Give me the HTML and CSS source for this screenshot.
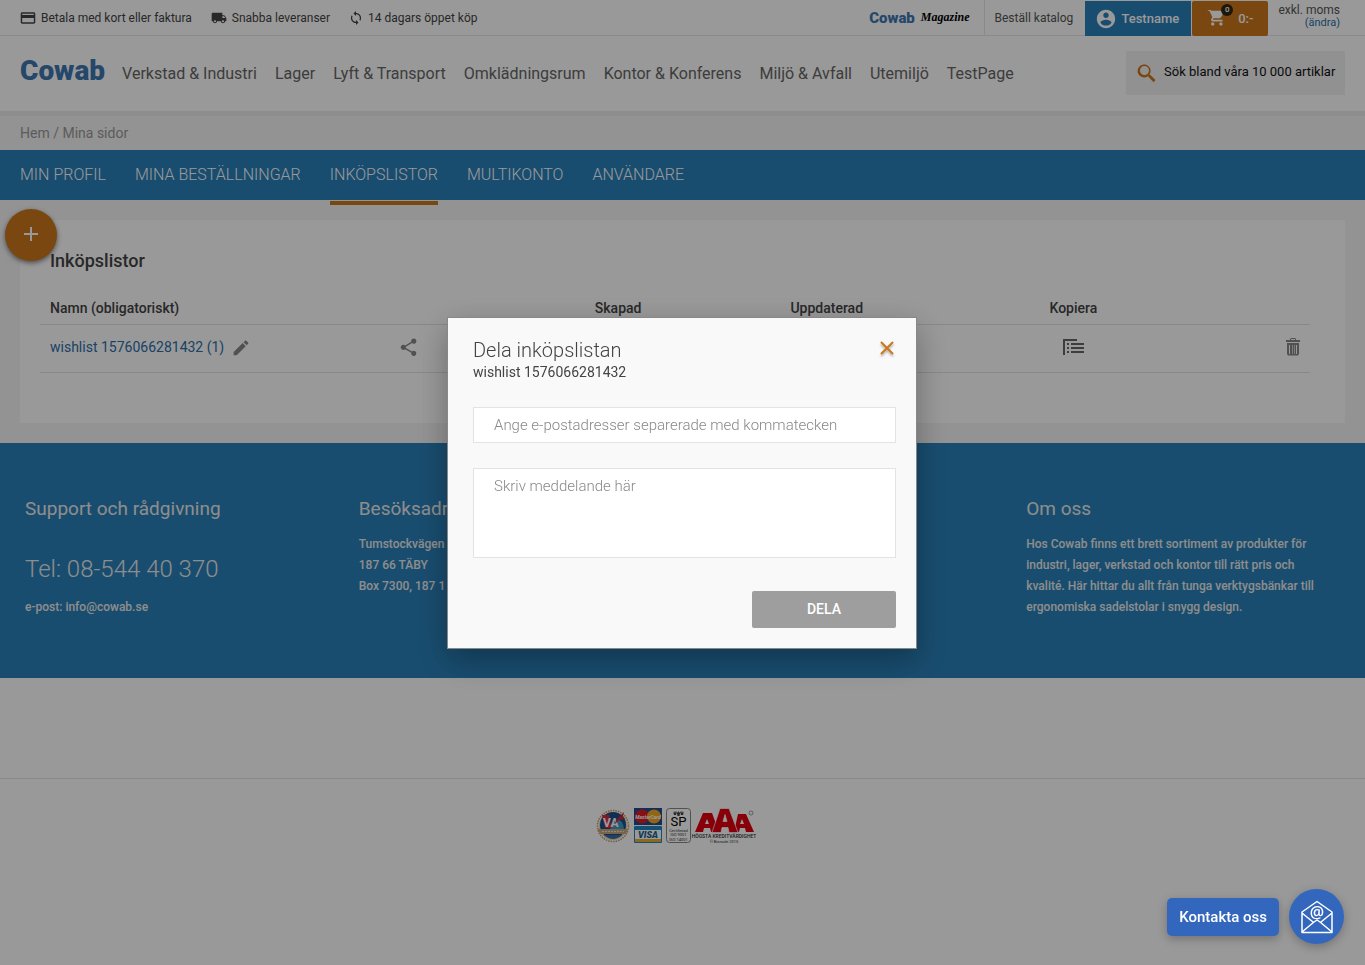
FILE: index.html
```html
<!DOCTYPE html>
<html lang="sv">
<head>
<meta charset="utf-8">
<meta name="viewport" content="width=device-width, initial-scale=1">
<title>Mina sidor – Inköpslistor</title>
<link rel="stylesheet" href="styles.css">
</head>
<body>
<div class="topbar">
  <ul class="usps">
    <li><svg width="16" height="16" viewBox="1 1 22 22"><path d="M20 4H4c-1.1 0-2 .9-2 2v12c0 1.100.9 2 2 2h16c1.100 0 2-.9 2-2V6c0-1.100-.9-2-2-2zm0 14H4v-6h16v6zm0-10H4V6h16v2z"/></svg>Betala med kort eller faktura</li>
    <li><svg width="16" height="16" viewBox="0 0 24 24"><path d="M20 8h-3V4H3c-1.100 0-2 .9-2 2v11h2c0 1.660 1.340 3 3 3s3-1.340 3-3h6c0 1.660 1.340 3 3 3s3-1.340 3-3h2v-5l-3-4zM6 18.500c-.83 0-1.500-.67-1.500-1.500s.67-1.500 1.500-1.500 1.500.67 1.500 1.500-.67 1.500-1.500 1.500zm13.500-9l1.960 2.500H17V9.500h2.500zm-1.500 9c-.83 0-1.500-.67-1.500-1.500s.67-1.500 1.500-1.500 1.500.67 1.500 1.500-.67 1.500-1.500 1.500z"/></svg>Snabba leveranser</li>
    <li><svg width="14" height="14" viewBox="1 1 22 22"><path d="M12 4V1L8 5l4 4V6c3.310 0 6 2.690 6 6 0 1.010-.25 1.970-.7 2.800l1.460 1.460C19.540 15.030 20 13.570 20 12c0-4.420-3.580-8-8-8zm0 14c-3.310 0-6-2.690-6-6 0-1.010.25-1.970.7-2.800L5.240 7.740C4.460 8.970 4 10.430 4 12c0 4.420 3.580 8 8 8v3l4-4-4-4v3z"/></svg>14 dagars öppet köp</li>
  </ul>
  <div class="tools">
    <a class="magazine" href="#"><span class="mag-brand">Cowab</span><span class="mag-word">Magazine</span></a>
    <a class="catalog" href="#">Beställ katalog</a>
    <a class="account" href="#"><svg width="22" height="22" viewBox="0 0 24 24"><path d="M12 2C6.480 2 2 6.480 2 12s4.480 10 10 10 10-4.480 10-10S17.520 2 12 2zm0 3c1.660 0 3 1.340 3 3s-1.340 3-3 3-3-1.340-3-3 1.340-3 3-3zm0 14.200c-2.500 0-4.710-1.280-6-3.220.03-1.990 4-3.080 6-3.080 1.990 0 5.970 1.090 6 3.080-1.290 1.940-3.500 3.220-6 3.220z"/></svg>Testname</a>
    <a class="cart" href="#"><span class="cart-icon"><svg width="18" height="18" viewBox="0 3 22 22"><path d="M7 18c-1.100 0-1.990.9-1.990 2S5.900 22 7 22s2-.9 2-2-.9-2-2-2zM1 2v2h2l3.600 7.590-1.350 2.450c-.16.28-.25.61-.25.960 0 1.100.9 2 2 2h12v-2H7.420c-.14 0-.25-.11-.25-.25l.03-.12.9-1.630h7.450c.75 0 1.410-.41 1.750-1.030l3.580-6.490A1 1 0 0 0 20 4H5.210l-.94-2H1zm16 16c-1.100 0-1.990.9-1.990 2s.89 2 1.990 2 2-.9 2-2-.9-2-2-2z"/></svg><span class="badge">0</span></span>0:-</a>
    <div class="vat"><span>exkl. moms</span><a href="#">(ändra)</a></div>
  </div>
</div>
<header class="header">
  <a class="logo" href="#">Cowab</a>
  <nav class="mainnav" aria-label="Kategorier">
    <a href="#">Verkstad &amp; Industri</a><a href="#">Lager</a><a href="#">Lyft &amp; Transport</a><a href="#">Omklädningsrum</a><a href="#">Kontor &amp; Konferens</a><a href="#">Miljö &amp; Avfall</a><a href="#">Utemiljö</a><a href="#">TestPage</a>
  </nav>
  <label class="search"><svg width="24" height="24" viewBox="0 0 24 24"><path d="M15.500 14h-.79l-.28-.27A6.500 6.500 0 1 0 13 15.200l.7.300v.79l5 4.990L20.490 19l-4.990-5zm-6 0A4.500 4.500 0 1 1 9.500 5a4.500 4.500 0 0 1 0 9z"/></svg><input type="text" aria-label="Sök" placeholder="Sök bland våra 10 000 artiklar"></label>
</header>
<div class="crumbs"><a href="#">Hem</a> / <span>Mina sidor</span></div>
<nav class="tabs" aria-label="Mina sidor">
  <a href="#">MIN PROFIL</a><a href="#">MINA BESTÄLLNINGAR</a><a class="active" href="#">INKÖPSLISTOR</a><a href="#">MULTIKONTO</a><a href="#">ANVÄNDARE</a>
</nav>
<main class="main">
  <section class="card">
    <button class="fab" aria-label="Skapa inköpslista"><svg width="16" height="16" viewBox="0 0 16 16"><path d="M7 0h2v6h6v2H9v6H7V8H1V6h6z"/></svg></button>
    <h1>Inköpslistor</h1>
    <table class="lists">
      <colgroup><col class="c-name"><col class="c-share"><col class="c-created"><col class="c-updated"><col></colgroup>
      <thead><tr><th>Namn (obligatoriskt)</th><th></th><th>Skapad</th><th>Uppdaterad</th><th>Kopiera</th></tr></thead>
      <tbody><tr>
        <td><div class="cell"><a href="#">wishlist 1576066281432 (1)</a><button class="icon" aria-label="Byt namn"><svg width="18" height="18" viewBox="1 0 22 22"><path d="M3 17.250V21h3.750L17.810 9.940l-3.750-3.750L3 17.250zM20.710 7.040a1 1 0 0 0 0-1.410l-2.340-2.340a1 1 0 0 0-1.410 0l-1.830 1.830 3.750 3.750 1.830-1.830z"/></svg></button></div></td>
        <td><button class="icon" aria-label="Dela"><svg width="20" height="20" viewBox="1 -1 23 23"><path d="M18 16.080c-.76 0-1.440.3-1.960.77L8.910 12.700c.05-.23.09-.46.09-.7s-.04-.47-.09-.7l7.050-4.110c.54.5 1.250.81 2.040.81 1.660 0 3-1.340 3-3s-1.340-3-3-3-3 1.340-3 3c0 .24.040.47.090.7L8.040 9.810C7.500 9.310 6.790 9 6 9c-1.660 0-3 1.340-3 3s1.340 3 3 3c.79 0 1.500-.31 2.040-.81l7.120 4.160c-.05.21-.08.43-.08.650 0 1.610 1.310 2.920 2.920 2.920s2.920-1.310 2.920-2.920-1.310-2.920-2.920-2.920z"/></svg></button></td>
        <td></td>
        <td></td>
        <td><div class="cell cell-actions"><button class="icon dark" aria-label="Kopiera"><svg width="21" height="17" viewBox="0 0 21 17"><path d="M0 0h14v2H2v14H0zM4 4h2v2H4zm4 0h13v2H8zM4 8h2v2H4zm4 0h13v2H8zm-4 4h2v2H4zm4 0h13v2H8z"/></svg></button><button class="icon" aria-label="Ta bort"><svg width="14" height="18" viewBox="0 0 14 18"><path fill-rule="evenodd" d="M4 2V1l1-1h4l1 1v1h4v2H0V2zm1 0h4V1H5zM1 5h12v11l-1 1.500H2L1 16zm2 2v9h1V7zm3 0v9h.6V7zm2 0v9h.6V7zm2 0v9h1V7z"/></svg></button></div></td>
      </tr></tbody>
    </table>
  </section>
</main>
<footer>
  <div class="info">
    <div><h2>Support och rådgivning</h2><p class="tel">Tel: 08-544 40 370</p><p>e-post: info@cowab.se</p></div>
    <div><h2>Besöksadress</h2><p>Tumstockvägen<br>187 66 TÄBY<br>Box 7300, 187 1</p></div>
    <div></div>
    <div><h2>Om oss</h2><p>Hos Cowab finns ett brett sortiment av produkter för industri, lager, verkstad och kontor till rätt pris och kvalité. Här hittar du allt från tunga verktygsbänkar till ergonomiska sadelstolar i snygg design.</p></div>
  </div>
  <div class="badges">
    <svg width="160" height="38" viewBox="0 0 160 38" role="img" aria-label="Certifieringar och betalkort">
      <circle cx="17" cy="18" r="15.500" fill="none" stroke="#c49a62" stroke-width="1.500" stroke-dasharray="1.500 1"/>
      <circle cx="17" cy="18" r="14" fill="#ddd0ba"/><circle cx="17" cy="17" r="13" fill="#1d4f85"/>
      <path d="M14 21l5-9q8-2 9 9z" fill="#3f9ac5"/>
      <path d="M6 7h7l3 13H9z" fill="#d82846"/>
      <text x="7" y="19" class="b-va">VA</text>
      <path d="M20 12l6-6 2-2-1 4 2 3-6 1-4 4z" fill="#c22c3c"/>
      <path d="M2 21h30l-2 5H4z" fill="#c6a77c"/><path d="M6 23.500h22" stroke="#efe3cc" stroke-dasharray="2 1"/><path d="M8 27h18q-9 8-18 0" fill="#396da0"/>
      <path d="M38 0h28v17H38z" fill="#204b91"/><circle cx="46" cy="8.500" r="7" fill="#e01b24"/><circle cx="58" cy="8.500" r="7" fill="#f3a923"/>
      <text x="52" y="11" class="b-mc">MasterCard</text>
      <path d="M38 18h28v17H38z" fill="#fff"/><path d="M39 19h26v3H39z" fill="#2188bd"/><path d="M39 31h26v3H39z" fill="#eab038"/><path d="M38.500 18.500h27v16h-27z" fill="none" stroke="#2188bd"/>
      <text x="52" y="30" class="b-visa">VISA</text>
      <rect x="70.500" y=".5" width="24" height="34" rx="3" fill="none" stroke="#888"/>
      <path d="M77 3l1 2 1-2 1 2 1-2-1 4h-2zm7 0l1 2 1-2 1 2 1-2-1 4h-2zm-3.500 0l1 2 1-2 1 2 1-2-1 5h-2z"/>
      <text x="82.500" y="18" class="b-sp">SP</text><text x="82.500" y="24" class="b-tiny">Certifierad</text><text x="82.500" y="28" class="b-tiny">ISO 9001</text><text x="82.500" y="33" class="b-tiny">ISO 14001</text>
      <g fill="#e2000f" fill-rule="evenodd">
        <path d="M99 24l8-19h9l7 19h-8l-1-4h-6l-1 4zm10-8h4l-2-5z"/>
        <path d="M138 24l4-18h8l8 18h-8l-1-4h-5l-1 4zm6-8h4l-2-5z"/>
        <path stroke="#fff" stroke-width=".7" d="M116 24.500l8-24h9l9 24h-9l-1-5h-6l-1 5zm11-11h4l-2-7z"/>
      </g>
      <circle cx="155" cy="5" r="2" fill="none" stroke="#777" stroke-width=".7"/>
      <text x="128" y="30" class="b-aaa">HÖGSTA KREDITVÄRDIGHET</text><text x="128" y="35" class="b-tiny">© Bisnode 2015</text>
    </svg>
  </div>
</footer>
<div class="overlay">
  <form class="dialog" role="dialog" aria-labelledby="dialog-title">
    <div class="dialog-head">
      <div><h2 id="dialog-title">Dela inköpslistan</h2><p>wishlist 1576066281432</p></div>
      <button class="close" type="button" aria-label="Stäng"><svg width="14" height="14" viewBox="0 0 14 14"><path d="M1 1l12 12M13 1L1 13"/></svg></button>
    </div>
    <input class="field" type="text" aria-label="E-postadresser" placeholder="Ange e-postadresser separerade med kommatecken">
    <textarea class="field message" aria-label="Meddelande" placeholder="Skriv meddelande här"></textarea>
    <button class="submit" type="button">DELA</button>
  </form>
</div>
<div class="chat">
  <button class="chat-label">Kontakta oss</button>
  <button class="chat-mail" aria-label="Skicka e-post"><svg width="34" height="34" viewBox="0 0 34 34"><path d="M2 12L17 1.500 32 12v20.500H2zM2 13l11 9M32 13l-11 9M2 32l12-10 3-2 3 2 12 10"/><text x="17" y="18">@</text></svg></button>
</div>
</body>
</html>
```
FILE: styles.css
```css
* { box-sizing: border-box; }
body { margin: 0; min-height: 100vh; background: #fff; color: #444; font-family: Roboto, "Liberation Sans", sans-serif; font-size: 14px; }
a { color: inherit; text-decoration: none; }
button, input, textarea { font: inherit; }
button { border: 0; padding: 0; background: none; cursor: pointer; }
h1, h2, p, ul { margin: 0; padding: 0; }
svg { display: block; flex: none; fill: currentColor; }

.topbar { display: flex; justify-content: space-between; height: 36px; padding: 0 25px 0 20px; border-bottom: 1px solid #e6e6e6; font-size: 12px; }
.usps { display: flex; align-items: center; gap: 19px; list-style: none; color: #444; }
.usps li { display: flex; align-items: center; gap: 5px; }
.tools { display: flex; align-items: stretch; color: #555; }
.magazine { display: flex; align-items: center; gap: 6px; padding-right: 14px; border-right: 1px solid #e6e6e6; }
.mag-brand { color: #3c77b1; font-size: 15px; font-weight: 900; }
.mag-word { color: #000; font-family: "Liberation Serif", serif; font-size: 12px; font-weight: 700; font-style: italic; }
.catalog { display: flex; align-items: center; padding: 0 12px 0 10px; }
.account, .cart { display: flex; align-items: center; height: 35px; margin-top: 1px; color: #fff; font-size: 13px; font-weight: 500; }
.account { gap: 4px; padding: 0 12px 0 10px; background: #2980b9; }
.cart { gap: 13px; margin-left: 1px; padding: 0 15px; background: #cc771b; border-radius: 2px; }
.cart-icon { position: relative; }
.badge { position: absolute; top: -6px; right: -8px; width: 12px; height: 12px; border-radius: 50%; background: #33250f; font-size: 8px; line-height: 12px; text-align: center; }
.vat { display: flex; flex-direction: column; align-items: flex-end; padding: 3px 0 0 10px; line-height: 14px; }
.vat a { color: #2a6fa8; font-size: 11px; line-height: 12px; }

.header { display: flex; align-items: center; height: 75px; padding: 0 20px 2px; }
.logo { color: #3c77b1; font-size: 28px; font-weight: 900; line-height: 32px; padding-bottom: 4px; }
.mainnav { display: flex; gap: 18px; margin: 2px 0 0 17px; color: #666; font-size: 16px; white-space: nowrap; }
.search { display: flex; align-items: center; gap: 5px; width: 219px; height: 44px; margin-left: auto; padding: 0 9px; background: #f2f2f2; color: #cc771b; }
.search input { flex: 1; min-width: 0; border: 0; padding: 0 0 2px; outline: 0; background: none; font-size: 13px; }
.search input::placeholder { color: #111; opacity: 1; }

.crumbs { height: 39px; padding: 9px 20px 0; border-top: 5px solid #ebebeb; background: #f5f5f5; color: #999; line-height: 17px; }
.tabs { display: flex; gap: 29px; height: 50px; padding: 0 20px; background: #2980b9; color: #fff; font-size: 16px; font-weight: 300; line-height: 49px; }
.tabs .active { height: 55px; border-bottom: 4px solid #cc771b; }
.main { padding: 20px; background: #f5f5f5; }
.card { position: relative; min-height: 203px; padding: 30px 35px 50px 20px; background: #fff; }
.card h1 { padding-left: 10px; font-size: 18px; font-weight: 500; line-height: 21px; }
.fab { position: absolute; top: -11px; left: -15px; display: grid; place-items: center; width: 52px; height: 52px; border-radius: 50%; background: #cc771b; color: #fff; box-shadow: 0 2px 5px rgba(0, 0, 0, .5); }
.lists { width: 100%; margin-top: 21px; border-collapse: collapse; table-layout: fixed; }
.lists th { height: 32px; padding: 0 10px; border-bottom: 1px solid #e3e3e3; font-weight: 500; text-align: left; }
.lists td { height: 48px; padding: 0 10px 2px; border-bottom: 1px solid #e3e3e3; color: #2a6fa8; }
.c-name { width: 27.500%; }
.c-share { width: 15.400%; }
.c-created { width: 15.400%; }
.c-updated { width: 20.400%; }
.cell { display: flex; align-items: center; gap: 8px; }
.cell-actions { justify-content: space-between; padding-left: 14px; }
.icon { color: #888; }
.icon.dark { color: #666; }

.info { display: grid; grid-template-columns: repeat(4, 1fr); min-height: 235px; padding: 53px 15px 0; background: #2980b9; color: #ececec; font-size: 12px; font-weight: 500; line-height: 21px; }
.info > div { padding: 0 25px 0 10px; }
.info h2 { margin-bottom: 12px; font-size: 19px; font-weight: 400; line-height: 26px; }
.info .tel { margin: 33px 0 14px; font-size: 24px; font-weight: 300; line-height: 28px; }
.badges { display: flex; justify-content: center; margin-top: 100px; padding: 29px 14px 29px 0; border-top: 1px solid #e3e3e3; }
.badges text { font-family: Roboto, sans-serif; text-anchor: middle; fill: #333; }
.badges .b-va { font-size: 12px; font-weight: 700; text-anchor: start; fill: #fff; }
.badges .b-mc { font-size: 5px; font-weight: 700; font-style: italic; fill: #fff; }
.badges .b-visa { font-size: 9px; font-weight: 900; font-style: italic; fill: #176194; }
.badges .b-sp { font-size: 13px; fill: #000; }
.badges .b-tiny { font-size: 4px; }
.badges .b-aaa { font-size: 5px; font-weight: 500; }

.overlay { position: fixed; inset: 0; display: grid; place-items: center; padding-right: 1px; background: rgba(0, 0, 0, .4); }
.dialog { display: flex; flex-direction: column; width: 470px; max-width: 100%; padding: 20px 20px 20px 25px; border: 1px solid #888; background: #f9f9f9; box-shadow: 0 11px 30px rgba(0, 0, 0, .3); }
.dialog-head { display: flex; align-items: flex-start; justify-content: space-between; margin-bottom: 25px; }
.dialog h2 { font-size: 20px; font-weight: 300; line-height: 24px; }
.dialog p { line-height: 20px; }
.close { margin: 3px 2px 0 0; color: #cc771b; filter: drop-shadow(0 2px 1px rgba(0, 0, 0, .3)); }
.close path { fill: none; stroke: currentColor; stroke-width: 2; }
.field { display: block; width: 100%; height: 36px; margin-bottom: 25px; padding: 0 20px; border: 1px solid #e3e3e3; border-radius: 0; outline: 0; background: #fff; font-size: 15px; font-weight: 300; }
.field::placeholder { color: #888; opacity: 1; }
.message { height: 90px; margin-bottom: 33px; padding-top: 8px; resize: none; }
.submit { align-self: flex-end; width: 144px; height: 37px; border-radius: 2px; background: #9e9e9e; color: #fff; font-weight: 500; }

.chat { position: fixed; right: 21px; bottom: 21px; display: flex; align-items: center; gap: 10px; }
.chat button { background: #3367bd; color: #fff; box-shadow: 0 3px 10px rgba(0, 0, 0, .25); }
.chat-label { height: 38px; padding: 0 12px; border-radius: 5px; font-size: 15px; font-weight: 500; }
.chat .chat-mail { display: grid; place-items: center; width: 55px; height: 55px; border-radius: 50%; }
.chat-mail path { fill: none; stroke: #fff; stroke-width: 1.500; stroke-linejoin: round; }
.chat-mail text { font-family: "Open Sans", sans-serif; font-size: 16px; font-weight: 600; text-anchor: middle; }
```
